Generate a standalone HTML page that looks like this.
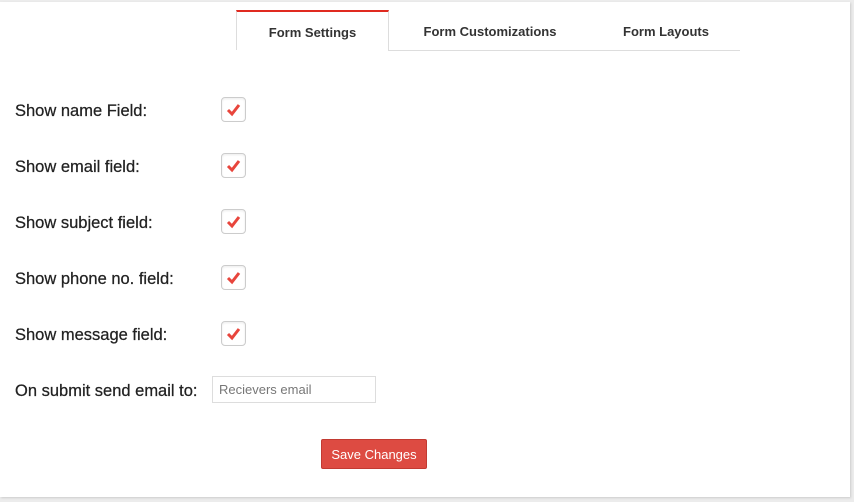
<!DOCTYPE html>
<html><head><style>
body{margin:0;background:#ececec;width:854px;height:502px;overflow:hidden;font-family:"Liberation Sans",sans-serif;}
.panel{position:absolute;left:0;top:2px;width:850px;height:495px;background:#fff;box-shadow:1px 1px 2px #ccc;}
.tab{position:absolute;top:8px;height:40px;line-height:43px;font-size:13px;font-weight:bold;color:#333;text-align:center;}
.act{left:236px;width:151px;border-top:2px solid #e02a20;border-left:1px solid #ddd;border-right:1px solid #ddd;height:38px;line-height:41px;}
.line{position:absolute;left:388px;top:48px;width:352px;height:1px;background:#ddd;}
.lbl{position:absolute;left:15px;font-size:16.5px;color:#222;-webkit-text-stroke:0.25px #222;}
.cb{position:absolute;left:221px;width:23px;height:23px;border:1px solid #ccc;border-radius:4px;background:#fff;box-shadow:inset 0 1px 2px rgba(0,0,0,.08);}
.inp{position:absolute;left:212px;font-size:13px;color:#777;line-height:25px;padding-left:6px;box-sizing:border-box;width:164px;height:27px;border:1px solid #ddd;}
.btn{position:absolute;left:321px;width:106px;height:30px;background:#dd4b42;border:1px solid #c23a32;border-radius:2px;color:#fff;font-size:13px;text-align:center;line-height:30px;box-sizing:border-box;}
</style></head><body>
<div class="panel">
<div class="tab act">Form Settings</div>
<div class="tab" style="left:388px;width:204px">Form Customizations</div>
<div class="tab" style="left:592px;width:148px">Form Layouts</div>
<div class="line"></div>
</div>
<div class="lbl" style="top:102px">Show name Field:</div>
<div class="lbl" style="top:158px">Show email field:</div>
<div class="lbl" style="top:214px">Show subject field:</div>
<div class="lbl" style="top:270px">Show phone no. field:</div>
<div class="lbl" style="top:326px">Show message field:</div>
<div class="lbl" style="top:382px">On submit send email to:</div>
<div class="cb" style="top:97px"><svg width="23" height="23"><path d="M6 12 L10 16 L17 7" stroke="#e8453c" stroke-width="3" fill="none"/></svg></div>
<div class="cb" style="top:153px"><svg width="23" height="23"><path d="M6 12 L10 16 L17 7" stroke="#e8453c" stroke-width="3" fill="none"/></svg></div>
<div class="cb" style="top:209px"><svg width="23" height="23"><path d="M6 12 L10 16 L17 7" stroke="#e8453c" stroke-width="3" fill="none"/></svg></div>
<div class="cb" style="top:265px"><svg width="23" height="23"><path d="M6 12 L10 16 L17 7" stroke="#e8453c" stroke-width="3" fill="none"/></svg></div>
<div class="cb" style="top:321px"><svg width="23" height="23"><path d="M6 12 L10 16 L17 7" stroke="#e8453c" stroke-width="3" fill="none"/></svg></div>
<div class="inp" style="top:376px">Recievers email</div>
<div class="btn" style="top:439px">Save Changes</div>
</body></html>
